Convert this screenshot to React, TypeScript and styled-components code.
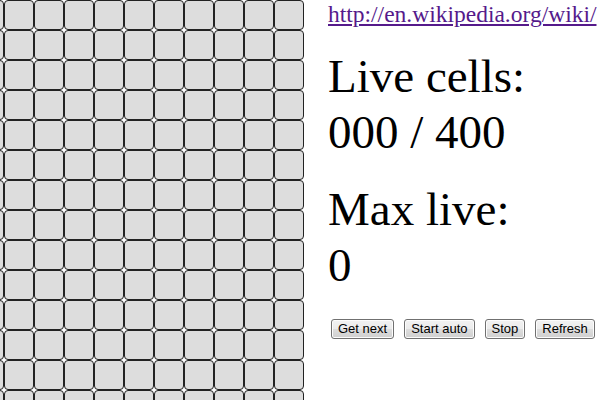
import React from "react";
import styled, { createGlobalStyle } from "styled-components";

const Global = createGlobalStyle`
  html, body { margin: 0; padding: 0; background: #fff; overflow: hidden; }
  body { font-family: "Liberation Serif", "Times New Roman", serif; }
`;

const Page = styled.div`
  display: flex;
  align-items: flex-start;
  width: 600px;
  height: 400px;
  overflow: hidden;
`;

const Board = styled.div`
  width: 304px;
  flex: none;
  overflow: hidden;
`;

const Grid = styled.div`
  display: grid;
  grid-template-columns: repeat(20, 30px);
  grid-auto-rows: 30px;
  margin-left: -26px;
  width: 600px;
`;

const Cell = styled.div<{ $alive?: boolean }>`
  box-sizing: border-box;
  border: 1px solid #222;
  border-radius: 4px;
  background: ${(p) => (p.$alive ? "#333" : "#ddd")};
`;

const Side = styled.div`
  display: flex;
  flex-direction: column;
  padding-left: 24px;
  min-width: 0;
`;

const Link = styled.a`
  font-size: 23.5px;
  line-height: 28px;
  white-space: nowrap;
  color: #551a8b;
  text-decoration: underline;
`;

const Stat = styled.div<{ $top: number }>`
  font-size: 47px;
  line-height: 56px;
  color: #000;
  margin-top: ${(p) => p.$top}px;
`;

const Buttons = styled.div`
  display: flex;
  gap: 10px;
  margin-top: 26px;
  padding-left: 3px;
`;

const Button = styled.button`
  font-family: "Liberation Sans", Arial, sans-serif;
  font-size: 13px;
  line-height: 16px;
  height: 20px;
  padding: 0 6px;
  color: #000;
  border: 1px solid #707070;
  border-radius: 3px;
  background: linear-gradient(#f2f2f2 0%, #ebebeb 50%, #dddddd 51%, #cfcfcf 100%);
  box-shadow: inset 0 0 0 1px #fcfcfc;
`;

export default function App() {
  const cells = Array.from({ length: 400 }, (_, i) => i);
  return (
    <>
      <Global />
      <Page>
        <Board>
          <Grid>
            {cells.map((i) => (
              <Cell key={i} />
            ))}
          </Grid>
        </Board>
        <Side>
          <Link href="http://en.wikipedia.org/wiki/">http://en.wikipedia.org/wiki/</Link>
          <Stat $top={20}>
            Live cells:
            <br />
            000 / 400
          </Stat>
          <Stat $top={21}>
            Max live:
            <br />0
          </Stat>
          <Buttons>
            <Button>Get next</Button>
            <Button>Start auto</Button>
            <Button>Stop</Button>
            <Button>Refresh</Button>
          </Buttons>
        </Side>
      </Page>
    </>
  );
}
